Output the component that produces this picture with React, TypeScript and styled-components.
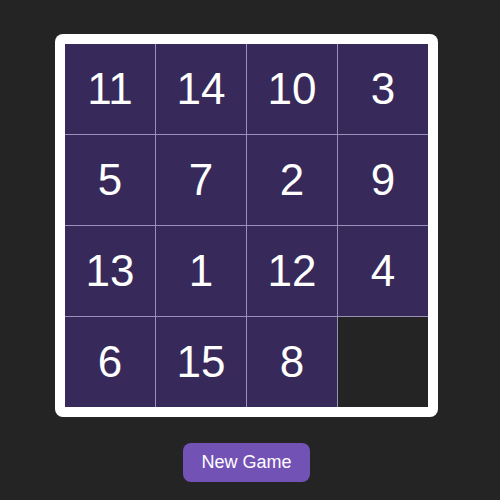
import React from "react";
import styled, { createGlobalStyle } from "styled-components";

const Global = createGlobalStyle`
  html, body { margin: 0; padding: 0; background: #242424; }
  body { font-family: "Liberation Sans", Arial, sans-serif; }
`;

const Page = styled.div`
  width: 493px;
  height: 500px;
  box-sizing: border-box;
  padding-top: 34px;
  display: flex;
  flex-direction: column;
  align-items: center;
  gap: 26px;
`;

const Frame = styled.div`
  background: #ffffff;
  padding: 10px;
  border-radius: 8px;
`;

const Board = styled.div`
  display: grid;
  grid-template-columns: repeat(4, 90px);
  grid-template-rows: repeat(4, 90px);
  gap: 1px;
  background: #9a90b9;
`;

const Tile = styled.div<{ $empty?: boolean }>`
  display: flex;
  align-items: center;
  justify-content: center;
  background: ${(p) => (p.$empty ? "#242424" : "#372a5b")};
  color: #ffffff;
  font-size: 44px;
  line-height: 1;
`;

const Button = styled.button`
  height: 39px;
  padding: 0 18px;
  border: none;
  border-radius: 8px;
  background: #7352b6;
  color: #ffffff;
  font-family: "Liberation Sans", Arial, sans-serif;
  font-size: 18px;
  cursor: pointer;
`;

const tiles = [11, 14, 10, 3, 5, 7, 2, 9, 13, 1, 12, 4, 6, 15, 8, 0];

export default function App() {
  return (
    <>
      <Global />
      <Page>
        <Frame>
          <Board>
            {tiles.map((n) => (
              <Tile key={n} $empty={n === 0}>
                {n === 0 ? "" : n}
              </Tile>
            ))}
          </Board>
        </Frame>
        <Button>New Game</Button>
      </Page>
    </>
  );
}
